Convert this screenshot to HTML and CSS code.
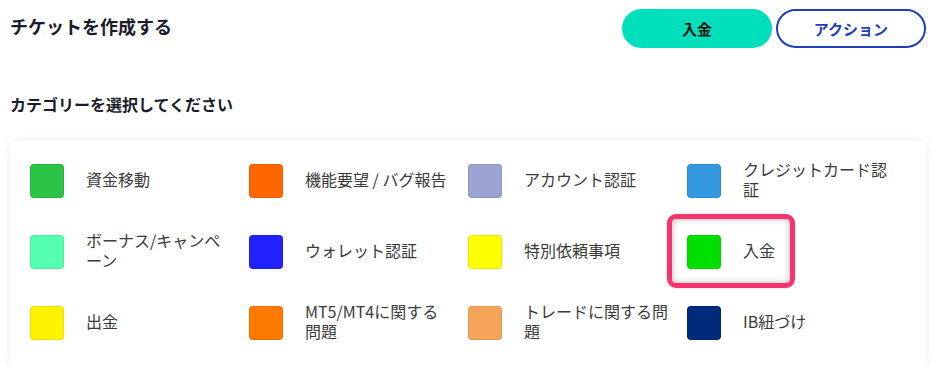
FILE: index.html
```html
<!DOCTYPE html>
<html lang="ja">
  <head>
    <meta charset="UTF-8" />
    <meta name="viewport" content="width=device-width, initial-scale=1.0" />
    <title>チケットを作成する</title>
    <link rel="stylesheet" href="styles.css">
  </head>
  <body>
    <div class="page">
      <div class="header">
        <h1>チケットを作成する</h1>
        <div class="actions">
          <button class="btn btn-primary" type="button">入金</button>
          <button class="btn btn-outline" type="button">アクション</button>
        </div>
      </div>

      <h2 class="subtitle">カテゴリーを選択してください</h2>

      <div class="card">
        <div class="categories">
          <div class="item"><span class="swatch c-transfer"></span><span class="label">資金移動</span></div>
          <div class="item"><span class="swatch c-feature"></span><span class="label">機能要望 / バグ報告</span></div>
          <div class="item"><span class="swatch c-account"></span><span class="label">アカウント認証</span></div>
          <div class="item"><span class="swatch c-card"></span><span class="label">クレジットカード認証</span></div>

          <div class="item"><span class="swatch c-bonus"></span><span class="label">ボーナス/キャンペーン</span></div>
          <div class="item"><span class="swatch c-wallet"></span><span class="label">ウォレット認証</span></div>
          <div class="item"><span class="swatch c-special"></span><span class="label">特別依頼事項</span></div>
          <div class="item selected"><span class="swatch c-deposit"></span><span class="label">入金</span></div>

          <div class="item"><span class="swatch c-withdraw"></span><span class="label">出金</span></div>
          <div class="item"><span class="swatch c-mt"></span><span class="label">MT5/MT4に関する問題</span></div>
          <div class="item"><span class="swatch c-trade"></span><span class="label">トレードに関する問題</span></div>
          <div class="item"><span class="swatch c-ib"></span><span class="label">IB紐づけ</span></div>
        </div>
      </div>
    </div>
  </body>
</html>
```

FILE: styles.css
```css
body {
  margin: 0;
  background: #ffffff;
  font-family: "Noto Sans CJK JP", "Noto Sans", sans-serif;
  color: #1b1c2a;
}

.page {
  padding: 9px 13px 0 10px;
}

.header {
  display: flex;
  justify-content: space-between;
  align-items: center;
}

h1 {
  margin: 0;
  font-size: 18px;
  font-weight: bold;
  line-height: 22px;
  margin-top: -6px;
}

.actions {
  display: flex;
  gap: 4px;
}

.btn {
  width: 150px;
  height: 39px;
  border-radius: 20px;
  font-family: inherit;
  font-size: 15px;
  font-weight: bold;
  cursor: pointer;
}

.btn-primary {
  background: #00dfbb;
  border: none;
  color: #111;
}

.btn-outline {
  background: #fff;
  border: 2px solid #1d3fb8;
  color: #1d3fb8;
}

.subtitle {
  margin: 46px 0 0 0;
  font-size: 16px;
  font-weight: bold;
  line-height: 20px;
}

.card {
  margin-top: 27px;
  height: 228px;
  width: 916px;
  background: #fff;
  border-radius: 6px;
  box-shadow: 0 0 10px rgba(0, 0, 0, 0.08);
}

.categories {
  display: grid;
  grid-template-columns: repeat(4, 219px);
  grid-auto-rows: 71px;
  padding: 4px 20px 0 20px;
}

.item {
  position: relative;
  display: flex;
  align-items: center;
  gap: 22px;
  padding-right: 17px;
}

.swatch {
  flex: none;
  width: 34px;
  height: 34px;
  border-radius: 4px;
  box-sizing: border-box;
  border: 1px solid rgba(0, 0, 0, 0.08);
}

.label {
  font-size: 16px;
  line-height: 20px;
  color: #3a3a3a;
  margin-top: -3px;
}

.selected::after {
  content: "";
  position: absolute;
  left: -20px;
  top: -2px;
  width: 128px;
  height: 74px;
  box-sizing: border-box;
  border: 5px solid #f5336e;
  border-radius: 9px;
  box-shadow: inset 0 0 6px rgba(0, 0, 0, 0.3), 0 0 3px rgba(0, 0, 0, 0.15);
}

.c-transfer { background: #2bc444; }
.c-feature { background: #ff6600; }
.c-account { background: #9aa3d1; }
.c-card { background: #3398de; }
.c-bonus { background: #55ffb0; }
.c-wallet { background: #2222ff; }
.c-special { background: #ffff00; }
.c-deposit { background: #00e000; }
.c-withdraw { background: #fff200; }
.c-mt { background: #ff7a00; }
.c-trade { background: #f5a55a; }
.c-ib { background: #002a7a; }
```
